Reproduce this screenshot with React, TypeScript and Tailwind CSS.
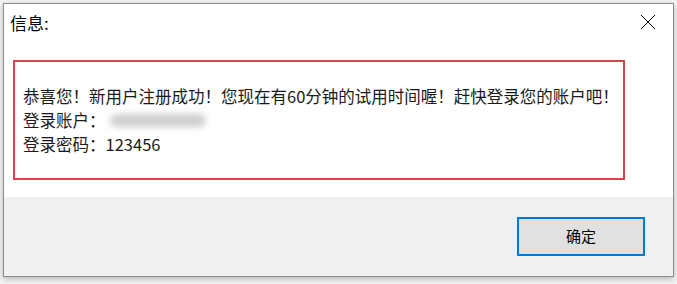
import React from 'react';

const App: React.FC = () => {
  return (
    <div
      className="w-[677px] h-[284px] bg-[#f3f3f3] pt-[3px] pl-[3px] overflow-hidden"
      style={{ fontFamily: '"Noto Sans CJK SC", "Noto Sans", sans-serif' }}
    >
      <div className="w-[671px] h-[274px] bg-white border border-[#8a8a8a] flex flex-col shadow-[0_2px_6px_rgba(0,0,0,0.25)]">
        {/* title bar */}
        <div className="h-[36px] flex items-center justify-between pl-[6px] pr-[17px]">
          <span className="text-[17px] text-black leading-none">信息:</span>
          <svg width="16" height="16" viewBox="0 0 16 16" className="text-black">
            <path d="M1 1 L15 15 M15 1 L1 15" stroke="currentColor" strokeWidth="1" fill="none" />
          </svg>
        </div>

        {/* message */}
        <div className="h-[157px] pt-[20px] pl-[9px]">
          <div className="w-[612px] h-[120px] border-2 border-[#d9434b] pt-[22px] pl-[8px] text-[16.5px] leading-[24px] text-[#1a1a1a]">
            <p>恭喜您！新用户注册成功！您现在有60分钟的试用时间喔！赶快登录您的账户吧！</p>
            <p className="flex items-center">
              登录账户：
              <span className="inline-block w-[96px] h-[13px] ml-[4px] rounded-full bg-[#cfcfcf] blur-[3px]" />
            </p>
            <p>登录密码：123456</p>
          </div>
        </div>

        {/* footer */}
        <div className="flex-1 bg-[#f0f0f0] flex justify-end items-start pt-[20px] pr-[28px]">
          <button className="w-[128px] h-[39px] bg-[#e1e1e1] border-2 border-[#0078d7] text-[15px] text-black">
            确定
          </button>
        </div>
      </div>
    </div>
  );
};

export default App;
